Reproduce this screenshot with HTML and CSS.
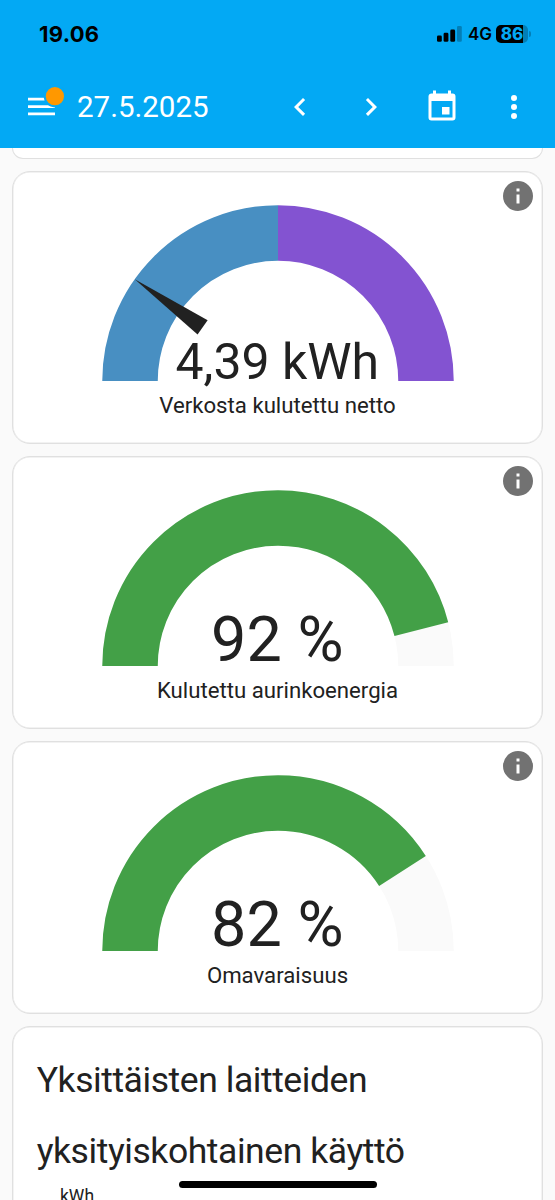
FILE: index.html
```html
<!DOCTYPE html>
<html lang="fi">
<head>
<meta charset="utf-8">
<title>Energia</title>
<link rel="stylesheet" href="styles.css">
</head>
<body>
<div class="screen">
  <header class="top">
    <div class="status">
      <span class="clock">19.06</span>
      <div class="status-right">
        <svg class="signal" width="26" height="16" viewBox="0 0 26 16">
          <rect x="0" y="9.6" width="4.8" height="6.2" rx="1.3"/>
          <rect x="6.6" y="6.8" width="4.8" height="9" rx="1.3"/>
          <rect x="13.3" y="3.6" width="4.8" height="12.2" rx="1.3"/>
          <rect x="20" y="0" width="4.8" height="15.8" rx="1.3" opacity=".25"/>
        </svg>
        <span class="network">4G</span>
        <div class="battery"><span class="level">86</span></div>
        <span class="battery-tip"></span>
      </div>
    </div>
    <nav class="toolbar">
      <svg class="menu" width="40" height="34" viewBox="0 0 40 34">
        <path d="M0 13.2h27M0 20.6h27M0 27.8h27" stroke="#fff" stroke-width="2.7"/>
        <circle cx="26.9" cy="10.2" r="11.2" fill="#03a9f4"/>
        <circle cx="26.9" cy="10.2" r="9.1" fill="#ff9800"/>
      </svg>
      <h1 class="date">27.5.2025</h1>
      <div class="actions">
        <svg width="36" height="36" viewBox="0 0 24 24"><path d="M15.41 16.58 10.83 12l4.58-4.59L14 6l-6 6 6 6z"/></svg>
        <svg width="36" height="36" viewBox="0 0 24 24"><path d="M8.59 16.58 13.17 12 8.59 7.41 10 6l6 6-6 6z"/></svg>
        <svg width="36" height="36" viewBox="0 0 24 24"><path d="M19 19H5V8h14m-3-7v2H8V1H6v2H5c-1.11 0-2 .89-2 2v14a2 2 0 0 0 2 2h14a2 2 0 0 0 2-2V5a2 2 0 0 0-2-2h-1V1m-1 11h-5v5h5z"/></svg>
        <svg width="36" height="36" viewBox="0 0 24 24"><path d="M12 16a2 2 0 1 1 0 4 2 2 0 0 1 0-4m0-6a2 2 0 1 1 0 4 2 2 0 0 1 0-4m0-6a2 2 0 1 1 0 4 2 2 0 0 1 0-4"/></svg>
      </div>
    </nav>
  </header>
  <main class="cards">
    <section class="card previous"></section>
    <section class="card gauge-card">
      <svg class="info" viewBox="0 0 24 24"><path d="M13 9h-2V7h2m0 10h-2v-6h2m-1-9a10 10 0 1 0 0 20 10 10 0 0 0 0-20"/></svg>
      <svg class="gauge" viewBox="-50 -50 100 50">
        <path class="arc blue" d="M-40 0A40 40 0 0 1 0 -40"/>
        <path class="arc purple" d="M0 -40A40 40 0 0 1 40 0"/>
        <path class="needle" d="M-25 -2.35-47.5 0-25 2.35z" transform="rotate(35.4)"/>
        <text class="value energy" x="-.2" y="-.6">4,39 kWh</text>
      </svg>
      <div class="name">Verkosta kulutettu netto</div>
    </section>
    <section class="card gauge-card">
      <svg class="info" viewBox="0 0 24 24"><path d="M13 9h-2V7h2m0 10h-2v-6h2m-1-9a10 10 0 1 0 0 20 10 10 0 0 0 0-20"/></svg>
      <svg class="gauge" viewBox="-50 -50 100 50">
        <path class="arc track" d="M-40 0A40 40 0 0 1 40 0"/>
        <path class="arc green" pathLength="100" stroke-dasharray="92.1 200" d="M-40 0A40 40 0 0 1 40 0"/>
        <text class="value percent" x="-.2" y="-1.3">92 %</text>
      </svg>
      <div class="name">Kulutettu aurinkoenergia</div>
    </section>
    <section class="card gauge-card">
      <svg class="info" viewBox="0 0 24 24"><path d="M13 9h-2V7h2m0 10h-2v-6h2m-1-9a10 10 0 1 0 0 20 10 10 0 0 0 0-20"/></svg>
      <svg class="gauge" viewBox="-50 -50 100 50">
        <path class="arc track" d="M-40 0A40 40 0 0 1 40 0"/>
        <path class="arc green" pathLength="100" stroke-dasharray="81.9 200" d="M-40 0A40 40 0 0 1 40 0"/>
        <text class="value percent" x="-.2" y="-1.3">82 %</text>
      </svg>
      <div class="name">Omavaraisuus</div>
    </section>
    <section class="card devices">
      <h2 class="title">Yksittäisten laitteiden yksityiskohtainen käyttö</h2>
      <div class="unit">kWh</div>
    </section>
  </main>
  <div class="home-bar"></div>
</div>
</body>
</html>
```
FILE: styles.css
```css
* { box-sizing: border-box; }
body { margin: 0; background: #fafafa; font-family: Roboto, sans-serif; color: #212121; }
.screen { position: relative; width: 555px; height: 1200px; overflow: hidden; display: flex; flex-direction: column; }
.top { flex: none; height: 147.5px; background: #03a9f4; }
.status { display: flex; justify-content: space-between; align-items: center; height: 67px; padding: 0 24px 0 39px; font-family: Inter, sans-serif; color: #000; }
.clock { font-size: 22px; font-weight: 700; letter-spacing: .3px; }
.status-right { display: flex; align-items: center; }
.signal { display: block; margin-right: 5px; }
.network { font-size: 17px; font-weight: 600; width: 28px; }
.battery { display: flex; align-items: center; justify-content: center; width: 32px; height: 18px; border-radius: 5px; background: linear-gradient(90deg, #000 27.5px, #027fb7 27.5px); }
.level { color: #03a9f4; font-size: 17px; font-weight: 800; line-height: 18px; }
.battery-tip { width: 2px; height: 6px; margin-left: 1px; border-radius: 0 2px 2px 0; background: #027fb7; }
.toolbar { display: flex; align-items: center; height: 80.5px; padding: 0 23.5px 0 28px; }
.menu { display: block; flex: none; margin-top: -8px; }
.date { margin: -1px 0 0 9px; font-size: 29.5px; font-weight: 400; line-height: 40px; color: #fff; }
.actions { display: flex; gap: 35.2px; margin: -1px 0 0 auto; }
.actions svg { display: block; fill: #fff; }
.cards { display: flex; flex-direction: column; gap: 12px; padding: 0 12px; }
.card { position: relative; flex: none; border: 1px solid #e0e0e0; border-radius: 18px; background: #fff; box-shadow: inset 0 0 0 .5px #e6e6e6; }
.previous { height: 11.2px; border-top: 0; border-radius: 0 0 18px 18px; box-shadow: none; }
.gauge-card { display: flex; flex-direction: column; align-items: center; height: 273.2px; padding-top: 24px; }
.info { position: absolute; top: 6px; right: 6px; width: 36px; height: 36px; fill: #727272; }
.gauge { display: block; width: 370px; height: 185px; overflow: visible; }
.arc { fill: none; stroke-width: 15; }
.blue { stroke: #488fc2; }
.purple { stroke: #8353d1; }
.green { stroke: #43a047; }
.track { stroke: #fafafa; }
.needle { fill: #212121; }
.value { fill: #212121; text-anchor: middle; }
.energy { font-size: 13.5px; }
.percent { font-size: 17px; }
.name { margin-top: 11.3px; font-size: 22.2px; line-height: 27px; }
.devices { height: 300px; padding: 18.2px 24px 0 23.7px; }
.title { margin: 0; font-size: 35.5px; font-weight: 400; line-height: 71px; letter-spacing: -.43px; }
.unit { padding-left: 23.3px; font-size: 17.5px; line-height: 18px; }
.home-bar { position: absolute; left: 178.5px; top: 1180.5px; width: 198px; height: 7.5px; border-radius: 4px; background: #000; }
```
